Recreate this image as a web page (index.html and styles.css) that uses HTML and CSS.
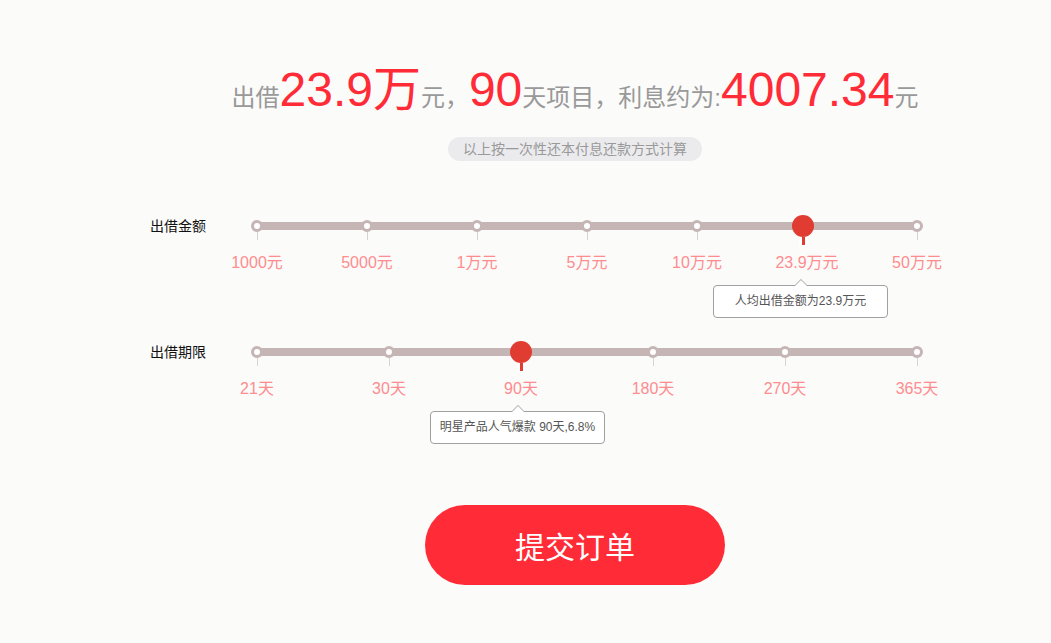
FILE: index.html
```html
<!DOCTYPE html>
<html lang="zh-CN">
<head>
<meta charset="utf-8">
<title>出借计算</title>
<link rel="stylesheet" href="styles.css">
</head>
<body>
<div class="wrap">
  <h1 class="headline">
    <span class="sm">出借</span><span class="big">23.9万</span><span class="sm">元，</span><span class="big">90</span><span class="sm">天项目，利息约为:</span><span class="big">4007.34</span><span class="sm">元</span>
  </h1>
  <div class="note-line"><span class="note">以上按一次性还本付息还款方式计算</span></div>

  <div class="row row-amount">
    <div class="row-label">出借金额</div>
    <div class="slider">
      <div class="stop"><div class="head"><i class="dot"></i><i class="tick"></i></div><div class="lbl">1000元</div></div>
      <div class="stop"><div class="head"><i class="dot"></i><i class="tick"></i></div><div class="lbl">5000元</div></div>
      <div class="stop"><div class="head"><i class="dot"></i><i class="tick"></i></div><div class="lbl">1万元</div></div>
      <div class="stop"><div class="head"><i class="dot"></i><i class="tick"></i></div><div class="lbl">5万元</div></div>
      <div class="stop"><div class="head"><i class="dot"></i><i class="tick"></i></div><div class="lbl">10万元</div></div>
      <div class="stop active nudge"><div class="head"><i class="dot"></i><i class="tick"></i></div><div class="lbl">23.9万元</div>
        <div class="tip">人均出借金额为23.9万元</div>
      </div>
      <div class="stop"><div class="head"><i class="dot"></i><i class="tick"></i></div><div class="lbl">50万元</div></div>
    </div>
  </div>

  <div class="row row-term">
    <div class="row-label">出借期限</div>
    <div class="slider">
      <div class="stop"><div class="head"><i class="dot"></i><i class="tick"></i></div><div class="lbl">21天</div></div>
      <div class="stop"><div class="head"><i class="dot"></i><i class="tick"></i></div><div class="lbl">30天</div></div>
      <div class="stop active"><div class="head"><i class="dot"></i><i class="tick"></i></div><div class="lbl">90天</div>
        <div class="tip">明星产品人气爆款 90天,6.8%</div>
      </div>
      <div class="stop"><div class="head"><i class="dot"></i><i class="tick"></i></div><div class="lbl">180天</div></div>
      <div class="stop"><div class="head"><i class="dot"></i><i class="tick"></i></div><div class="lbl">270天</div></div>
      <div class="stop"><div class="head"><i class="dot"></i><i class="tick"></i></div><div class="lbl">365天</div></div>
    </div>
  </div>

  <button class="submit" type="button">提交订单</button>
</div>
</body>
</html>
```

FILE: styles.css
```css
html, body {
  margin: 0;
  padding: 0;
  background: #fbfbfa;
}
body {
  font-family: "Liberation Sans", Arial, "Noto Sans CJK SC", sans-serif;
  color: #333;
}
.wrap {
  margin-left: 150px;
  width: 850px;
  padding-top: 60px;
}
.headline {
  margin: 0;
  font-weight: normal;
  text-align: center;
  line-height: 60px;
  white-space: nowrap;
}
.headline .sm {
  font-size: 24px;
  color: #999;
}
.headline .big {
  font-size: 48px;
  color: #ff2b37;
}
.note-line {
  margin-top: 9px;
  text-align: center;
}
.note {
  display: inline-block;
  height: 24px;
  line-height: 24px;
  padding: 0 15px;
  border-radius: 12px;
  background: #ebebee;
  color: #999;
  font-size: 14px;
}

.row {
  display: flex;
  align-items: flex-start;
}
.row-amount { margin-top: 54px; }
.row-term { margin-top: 68px; }
.row-label {
  width: 101px;
  line-height: 22px;
  font-size: 14px;
  color: #111;
}
.slider {
  position: relative;
  width: 672px;
  display: flex;
  justify-content: space-between;
}
.slider::before {
  content: "";
  position: absolute;
  left: 6px;
  right: 6px;
  top: 7px;
  height: 8px;
  background: #c5b5b5;
}
.stop {
  position: relative;
  width: 12px;
  display: flex;
  flex-direction: column;
  align-items: center;
}
.head {
  height: 30px;
  display: flex;
  flex-direction: column;
  align-items: center;
}
.dot {
  display: block;
  box-sizing: border-box;
  width: 12px;
  height: 12px;
  margin-top: 5px;
  border-radius: 50%;
  background: #fff;
  border: 3px solid #c5b5b5;
  position: relative;
}
.tick {
  display: block;
  width: 1px;
  height: 8px;
  background: #d4d4d4;
}
.active .dot {
  width: 22px;
  height: 22px;
  margin-top: 0;
  border: 0;
  background: #e03c32;
}
.active .tick {
  width: 3px;
  height: 8px;
  background: #e03c32;
  box-shadow: 0 0 0 3px #fff;
  clip-path: inset(0 -3px -1px -3px);
}
.nudge .head {
  transform: translateX(-4px);
}
.lbl {
  margin-top: 8px;
  line-height: 20px;
  font-size: 16px;
  color: #ff8c8f;
  white-space: nowrap;
}
.tip {
  position: absolute;
  top: 70px;
  left: 50%;
  width: 175px;
  height: 33px;
  box-sizing: border-box;
  margin-left: -91px;
  border: 1px solid #a0a0a0;
  border-radius: 4px;
  background: #fff;
  color: #555;
  font-size: 12px;
  line-height: 31px;
  text-align: center;
  white-space: nowrap;
}
.nudge .tip {
  margin-left: -94px;
}
.tip::before,
.tip::after {
  content: "";
  position: absolute;
  left: 50%;
  width: 0;
  height: 0;
  border-style: solid;
}
.tip::before {
  top: -7px;
  margin-left: -7px;
  border-width: 0 7px 7px 7px;
  border-color: transparent transparent #a0a0a0 transparent;
}
.tip::after {
  top: -6px;
  margin-left: -6px;
  border-width: 0 6px 6px 6px;
  border-color: transparent transparent #fff transparent;
}

.submit {
  display: block;
  margin: 106px 0 0 275px;
  width: 300px;
  height: 80px;
  border: 0;
  border-radius: 40px;
  background: #ff2b37;
  color: #fff;
  font-family: "Liberation Sans", Arial, "Noto Sans CJK SC", sans-serif;
  font-size: 30px;
  padding: 0;
  cursor: pointer;
}
```
